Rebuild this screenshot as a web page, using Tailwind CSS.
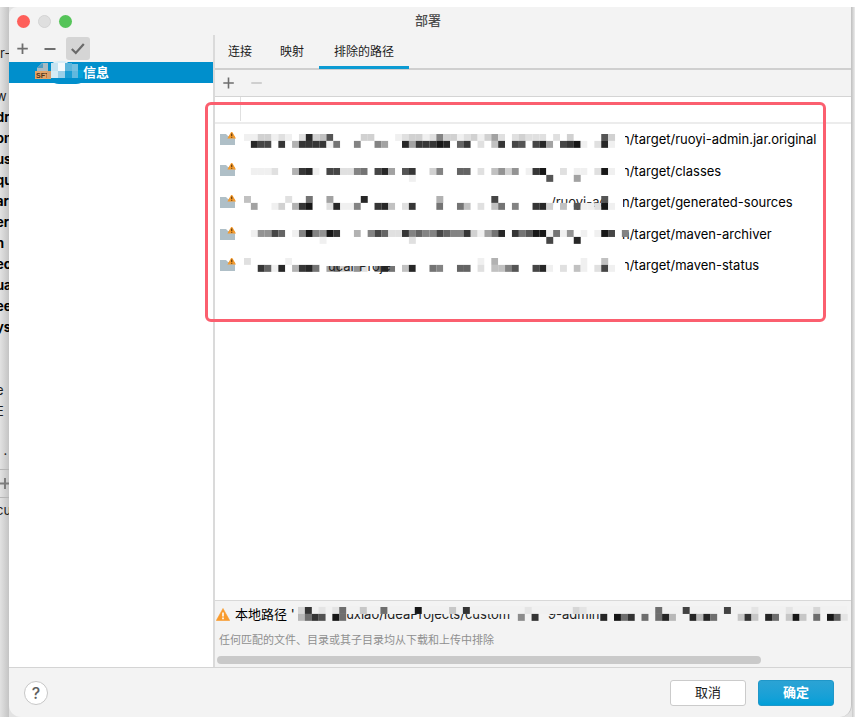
<!DOCTYPE html>
<html lang="zh-CN">
<head>
<meta charset="utf-8">
<meta name="viewport" content="width=device-width, initial-scale=1">
<title>部署</title>
<script src="https://cdn.jsdelivr.net/npm/@tailwindcss/browser@4"></script>
</head>
<body class="bg-white pt-[7px] pr-1 pb-[3px] min-h-screen flex flex-col font-['Inter','Noto_Sans_CJK_SC',sans-serif] text-[13px] text-[#1c1c1c]">
<div class="flex-1 flex bg-[#e2e2e2]">
  <!-- Edge of the settings window behind the dialog -->
  <aside class="w-[9px] shrink-0 overflow-hidden whitespace-nowrap pt-9 leading-[21px] bg-linear-to-r from-[#e2e2e2] to-[#c4c4c4]">
    <p>r-</p>
    <div class="h-[22px]"></div>
    <p class="-ml-1">w</p>
    <div class="-ml-1 font-bold text-black">
      <p>dr</p><p>on</p><p>us</p><p>qu</p><p>ar</p><p>er</p><p>n</p><p>ec</p><p>ua</p><p>ee</p><p>ys</p>
    </div>
    <div class="h-[42px]"></div>
    <p class="-ml-1">e</p>
    <p class="-ml-1">E</p>
    <div class="h-[18px]"></div>
    <p class="-ml-1">: .</p>
    <div class="mt-2 h-[29px] border-y border-[#b5b5b5] flex items-center">
      <svg class="w-3 h-3 shrink-0" viewBox="0 0 12 12" stroke="#7d7d7d" stroke-width="2"><path d="M5 0v11M0 5.5h11"/></svg>
    </div>
    <p class="mt-[2px] -ml-1">cu</p>
  </aside>

  <main class="flex-1 min-w-0 flex flex-col bg-[#f3f3f3] rounded-tl-lg rounded-b-xl overflow-hidden relative border-r border-[#c4c4c4]">
    <header class="h-[28px] shrink-0 flex items-center px-2">
      <div class="flex gap-2 w-20">
        <button aria-label="关闭" class="size-[13px] rounded-full bg-[#fe5f5a]"></button>
        <button aria-label="最小化" class="size-[13px] rounded-full bg-[#dfdfdf] border border-[#d3d3d3]"></button>
        <button aria-label="缩放" class="size-[13px] rounded-full bg-[#55c459]"></button>
      </div>
      <h1 class="flex-1 text-center font-medium text-[#4c4c4c] pr-[84px]">部署</h1>
    </header>

    <div class="flex-1 flex min-h-0">
      <section class="w-[204px] shrink-0 flex flex-col">
        <div class="h-[27px] flex items-center px-2">
          <button aria-label="添加" class="w-3"><svg class="size-3" viewBox="0 0 12 12" stroke="#6e6e6e" stroke-width="1.8"><path d="M5.5 .5v10.500M.3 5.700h10.500"/></svg></button>
          <button aria-label="移除" class="w-3 ml-[15px]"><svg class="size-3" viewBox="0 0 12 12" stroke="#6e6e6e" stroke-width="1.8"><path d="M.5 6h11"/></svg></button>
          <button aria-label="设为默认" class="ml-[10px] w-6 h-[23px] rounded-[3px] bg-[#d5d5d5] flex items-center justify-center"><svg class="w-4 h-3" viewBox="0 0 16 12" fill="none" stroke="#6a6a6a" stroke-width="2.2"><path d="M1.800 6l4 4L13.800 1"/></svg></button>
        </div>
        <div class="flex-1 bg-white">
          <a href="#" class="h-[21px] bg-[#008fcc] flex items-center pl-[26px] text-white font-bold">
            <svg class="w-12 h-[25px] shrink-0 overflow-visible" viewBox="0 0 48 25">
              <path d="M15 12h33v9q-2 3-7 3H24q-5 0-9-4z" fill="#008fcc"/>
              <path d="M2 11V8l5-5h6v9H2z" fill="#a9bac2"/><path d="M2 8l6-5v5z" fill="#4d9cc3"/>
              <path d="M16 4q5-4 14-3l5 3z" fill="#d9eef7"/>
              <path d="M0 11h16v8H0z" fill="#e3a468"/>
              <text x="1" y="18" font-size="7" font-family="Liberation Sans" fill="#53361d">SFT</text>
              <path d="M16 3h7v8h-7z" fill="#c5e3f1"/><path d="M23 3h7v8h-7z" fill="#f4fafd"/><path d="M30 3h7v8h-7z" fill="#5ab5dc"/><path d="M37 4h6v7h-6z" fill="#73bfe0"/>
              <path d="M12 11h4v7h-4z" fill="#d2a074"/><path d="M16 11h7v7h-7z" fill="#d3ebf5"/><path d="M23 11h7v7h-7z" fill="#9cd0e8"/><path d="M30 11h7v7h-7z" fill="#1b9ed4"/><path d="M37 11h6v7h-6z" fill="#60b8de"/><path d="M43 10h5v8h-5z" fill="#04a0d7"/>
            </svg>
            <span>信息</span>
          </a>
        </div>
      </section>

      <section class="flex-1 min-w-0 flex flex-col border-l-2 border-[#dadada]">
        <nav class="h-[35px] shrink-0 flex border-b-2 border-[#cfcfcf] text-[12px]">
          <a href="#" class="w-[52px] pt-px pr-1 pl-[2px] flex items-center justify-center">连接</a>
          <a href="#" class="w-[52px] pt-px pr-[2px] flex items-center justify-center">映射</a>
          <a href="#" class="w-[90px] h-[34px] pt-[3px] border-b-3 border-[#0c9bd3] flex items-center justify-center">排除的路径</a>
        </nav>
        <div class="h-[27px] shrink-0 flex items-center px-2 gap-4 border-b border-[#d4d4d4]">
          <button aria-label="添加路径" class="w-3"><svg class="size-3" viewBox="0 0 12 12" stroke="#6e6e6e" stroke-width="1.6"><path d="M5.500 .5v11M.3 6h10.500"/></svg></button>
          <button aria-label="移除路径" disabled class="w-3"><svg class="size-3" viewBox="0 0 12 12" stroke="#c3c3c3" stroke-width="1.6"><path d="M.3 6h10.500"/></svg></button>
        </div>
        <div class="flex-1 bg-white">
          <div class="h-[27px] border-b-2 border-[#ececec]"><div class="w-[26px] h-6 border-r border-[#e0e0e0]"></div></div>
          <ul id="paths" class="grid grid-rows-5 h-[158px] pl-[5px] whitespace-nowrap"></ul>
        </div>
        <footer class="h-[67px] shrink-0 border-t border-[#d8d8d8] flex flex-col">
          <div class="h-[27px] flex items-center pl-[1px] whitespace-nowrap">
            <svg class="w-[14px] h-[13px] shrink-0" viewBox="0 0 14 13"><path d="M7 .5L13.7 12.5H.3z" fill="#f99b2d" stroke="#f99b2d" stroke-width=".6" stroke-linejoin="round"/><path d="M7 4.5v4M7 9.6v1.6" stroke="#fff" stroke-width="1.6"/></svg>
            <span class="ml-[5px] w-[63px] text-black">本地路径 '</span>
            <svg id="local" class="flex-1 h-[27px] overflow-visible" role="img" aria-label="路径"></svg>
          </div>
          <p class="h-6 pl-1 flex items-center text-[11px] text-[#8f8f8f]">任何匹配的文件、目录或其子目录均从下载和上传中排除</p>
          <div class="mt-1 mx-[2px] h-2"><div class="w-[86%] h-2 rounded-full bg-[#c9c9c9]"></div></div>
        </footer>
      </section>
    </div>

    <div class="h-[50px] shrink-0 border-t border-[#d4d4d4] flex items-center gap-3 pl-[15px] pr-[17px]">
      <button aria-label="帮助" class="size-6 rounded-full bg-white border border-[#c6c6c6] text-[#5f5f5f] text-[16px] leading-none font-medium mr-auto">?</button>
      <button class="w-[76px] h-[26px] rounded-[3px] bg-white border border-[#cbcbcb]">取消</button>
      <button class="w-[76px] h-[26px] rounded-[3px] bg-linear-to-b from-[#2ba3d4] to-[#009fd8] border border-[#1f97c9] text-white font-bold">确定</button>
    </div>

    <!-- Highlight drawn over the excluded paths -->
    <div class="absolute left-[196px] right-[25px] top-[95px] h-[220px] border-3 border-[#fb5f6f] rounded-md pointer-events-none"></div>
  </main>
  <div class="w-[3px] shrink-0 bg-linear-to-r from-[#c9c9c9] to-[#ececec]"></div>
</div>

<template id="row">
  <li class="flex items-center min-w-0">
    <svg class="w-[17px] h-4 shrink-0 mr-[7px]" viewBox="0 0 17 16"><path d="M0 2h6l2 2h7v9H0z" fill="#afbfc7"/><path d="M11.700 -1l4.300 7.500H7.400z" fill="#f59a2c"/><path d="M11.700 1.500v2.600M11.700 4.800v1" stroke="#6b4310" stroke-width="1.3"/></svg>
    <svg class="w-[378px] h-[31px] shrink-0 overflow-visible relative z-10" role="img" aria-label="已隐藏"></svg>
    <span class="text-black"></span>
  </li>
</template>
<script>
const NS = 'http://www.w3.org/2000/svg';
function add(svg, tag, attrs, text) {
  const e = document.createElementNS(NS, tag);
  for (const [k, v] of Object.entries(attrs)) e.setAttribute(k, v);
  if (text) e.textContent = text;
  svg.append(e);
}
const rect = (svg, x, y, width, height, fill) => add(svg, 'rect', { x, y, width, height, fill });
const label = (svg, x, y, text) => add(svg, 'text', { x, y, fill: '#222' }, text);

// A line is a string with one hex digit per cell (0 is the background, f is
// black) or an object that maps a cell's index to its digit.
function cells(svg, y, lines, bg) {
  lines.forEach((line, r) => {
    for (const [i, ch] of Object.entries(line)) {
      const v = Math.round(bg * (1 - parseInt(ch, 16) / 16.5));
      rect(svg, i * 6.87, y + r * 6.9, 6.95, 6.95, `rgb(${v},${v},${v})`);
    }
  });
}

const rows = [
  { name: 'n/target/ruoyi-admin.jar.original', y: 10, cut: 3, lines: [
    '113312102e34b00003300012331283312313620232220203' + '0000b3',
    '0ecc0d05dddd19008008600e6dddfe0ad0204d0cb0ce60cdf102e1'] },
  { name: 'n/target/classes', y: 12, cut: 3, lines: [
    '01112005de10cc22890ce60bd003800aa020473701df00201102f1',
    { 24: '1', 44: 'b', 48: '6' }] },
  { name: 'n/target/generated-sources', y: 9, cut: 1, text: [307, 20, '/ruoyi-ad'], lines: [
    { 0: '4', 6: '2', 9: '9', 12: '6', 17: 'e', 28: '5', 36: 'c', 52: 'b' },
    '06001305df002e11800de402d00090094020490800de3040b112f1'] },
  { name: 'n/target/maven-archiver', y: 11, cut: 0, lines: [
    '0177ca018f87fd00508ca22d8a88ca88d3169e0d9bff19170101fc08',
    { 11: '1', 24: '2', 44: 'c', 48: 'e' }] },
  { name: 'n/target/maven-status', y: 7, cut: 3, text: [84, 20, 'ucar Proje'], cover: [82, 7, 72, 8], lines: [
    '20000010000010000100000000000000001050000000000001004',
    '00da1e05de9069337208e904e009800aa020448b00ce10204102c1'] }
];
for (const r of rows) {
  const li = document.getElementById('row').content.cloneNode(true);
  const svg = li.querySelectorAll('svg')[1];
  if (r.text && !r.cover) label(svg, ...r.text);
  cells(svg, r.y, r.lines, 255);
  if (r.cover) { label(svg, ...r.text); rect(svg, ...r.cover, '#fff'); }
  if (r.cut) rect(svg, 378, 8, r.cut, 15, '#fff');
  li.querySelector('span').textContent = r.name;
  document.getElementById('paths').append(li);
}

const local = document.getElementById('local');
label(local, 45, 18, 'luxiao/IdeaProjects/custom');
label(local, 250, 18, '9-admin');
rect(local, 0, 5, 549, 8, '#f1f1f1');
cells(local, 6, [
  { 0: '2', 1: 'd', 3: '1', 5: '1', 6: '9', 9: '3', 12: '9', 17: 'f', 22: '3', 24: 'd', 33: '1', 40: '2', 41: '1', 52: '9', 56: 'c', 62: 'c', 66: '1', 71: '1', 75: '2' },
  { 0: '4', 1: '9', 2: 'd', 3: 'b', 5: 'f', 6: '9', 32: '7', 34: 'd', 44: 'e', 46: 'f', 47: '9', 48: 'd', 50: '9', 52: '9', 53: 'e', 54: '4', 57: 'e', 58: '4', 59: 'e', 60: '9', 64: '3', 65: 'd', 66: '3', 68: 'e', 69: '9', 71: '3', 72: 'f', 73: '3', 75: '9', 77: 'f', 78: 'a', 79: '1' }
], 243);
</script>
</body>
</html>
